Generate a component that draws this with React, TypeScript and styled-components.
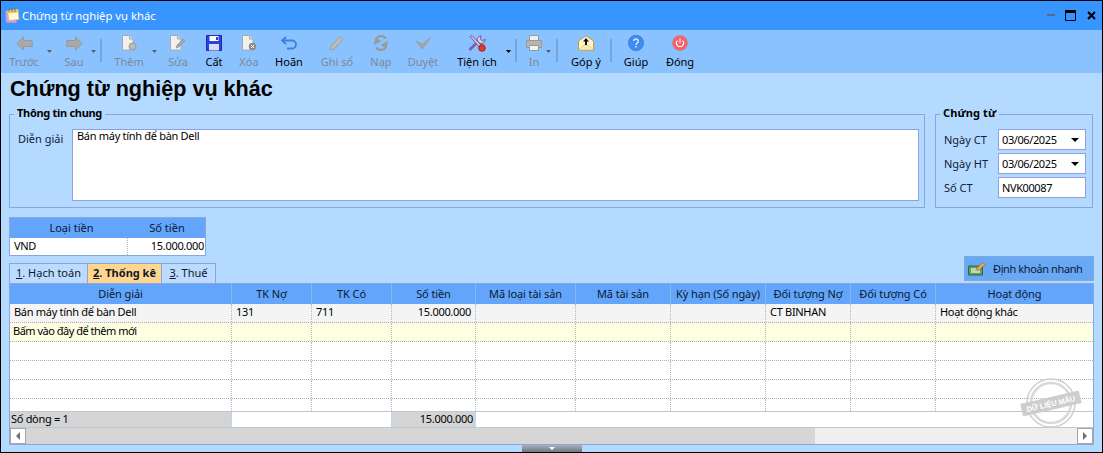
import React from "react";
import styled, { createGlobalStyle } from "styled-components";

const Global = createGlobalStyle`
  html, body { margin: 0; padding: 0; height: 100%; overflow: hidden; }
  #root { height: 100%; }
  * { box-sizing: border-box; }
  body { font-family: "Noto Sans", "Liberation Sans", Arial, sans-serif; font-size: 11px; color: #000; }
`;

const FONT_LINE = "#8AA6DC";

const Window = styled.div`
  position: relative;
  width: 1103px;
  height: 453px;
  border: 1px solid #000;
  background: #b5daff;
  display: flex;
  flex-direction: column;
  overflow: hidden;
`;
const TitleBar = styled.div`
  height: 29px;
  background: #3895ff;
  display: flex;
  align-items: center;
  padding: 0 6px 0 3px;
  flex: none;
`;
const TitleText = styled.div`
  color: #fff;
  font-size: 11.3px;
  margin-left: 2px;
  flex: 1;
`;
const WinControls = styled.div`
  display: flex;
  align-items: center;
`;
const WinBtn = styled.svg<{ $ml: number }>`
  margin-left: ${(p) => p.$ml}px;
  display: block;
`;
const Toolbar = styled.div`
  height: 43px;
  background: #8ac2ff;
  display: flex;
  align-items: flex-start;
  flex: none;
`;
const Tool = styled.div<{ $w: number; $ml: number; $off?: boolean }>`
  width: ${(p) => p.$w}px;
  margin-left: ${(p) => p.$ml}px;
  flex: none;
  display: flex;
  flex-direction: column;
  align-items: center;
  padding-top: 3px;
  color: ${(p) => (p.$off ? "#7d8894" : "#000")};
  white-space: nowrap;
`;
const ToolIcon = styled.div`
  height: 20px;
  display: flex;
  align-items: center;
  justify-content: center;
`;
const ToolLabel = styled.div`
  margin-top: 1px;
  line-height: 15px;
`;
const Caret = styled.div<{ $off?: boolean }>`
  width: 5px;
  height: 3px;
  flex: none;
  margin-top: 20px;
  clip-path: polygon(0 0, 100% 0, 50% 100%);
  background: ${(p) => (p.$off ? "#55606c" : "#000")};
`;
const Sep = styled.div<{ $ml: number }>`
  width: 2px;
  height: 23px;
  margin-top: 9px;
  margin-left: ${(p) => p.$ml}px;
  background: #74a6dc;
  flex: none;
`;
const Body = styled.div`
  flex: 1;
  display: flex;
  flex-direction: column;
  padding: 0 8px 0 8px;
  min-height: 0;
`;
const Heading = styled.h1`
  margin: 0;
  height: 34px;
  padding: 2px 0 0 1px;
  font-family: "Liberation Sans", Arial, sans-serif;
  font-size: 21.6px;
  line-height: 28px;
  font-weight: 700;
  color: #000;
`;
const Groups = styled.div`
  display: flex;
  gap: 10px;
  height: 101px;
  padding-right: 1px;
`;
const Group = styled.fieldset<{ $w?: number }>`
  margin: 0;
  min-width: 0;
  border: 1px solid ${FONT_LINE};
  padding: 8px 5px 5px 8px;
  ${(p) => (p.$w ? `width: ${p.$w}px; flex: none;` : "flex: 1;")}
  display: flex;
`;
const GroupTitle = styled.legend<{ $tight?: boolean }>`
  font-weight: 700;
  margin-left: -4px;
  padding: 0 3px 2px;
  line-height: 12px;
  letter-spacing: ${(p) => (p.$tight ? "-0.3px" : "0.1px")};
`;
const NoteRow = styled.div`
  display: flex;
  flex: 1;
  height: 72px;
`;
const NoteLabel = styled.div`
  width: 54px;
  flex: none;
  padding-top: 2px;
  color: #10203a;
`;
const NoteBox = styled.div`
  flex: 1;
  height: 72px;
  background: #fff;
  border: 1px solid #8f9fe2;
  padding: 0 4px;
  line-height: 12px;
  letter-spacing: -0.3px;
`;
const Fields = styled.div`
  display: flex;
  flex-direction: column;
  gap: 3px;
  width: 100%;
`;
const FieldRow = styled.div`
  display: flex;
  align-items: center;
  height: 21px;
`;
const FieldLabel = styled.div`
  width: 54px;
  flex: none;
  color: #10203a;
`;
const Input = styled.div`
  width: 88px;
  height: 21px;
  background: #fff;
  border: 1px solid #8f9fe2;
  display: flex;
  align-items: center;
  justify-content: space-between;
  padding: 0 6px 0 3px;
  letter-spacing: -0.4px;
`;
const SelectCaret = styled.span`
  width: 0;
  height: 0;
  border-left: 4px solid transparent;
  border-right: 4px solid transparent;
  border-top: 4px solid #000;
  margin-top: 1px;
`;
const MiniGrid = styled.div`
  margin-top: 9px;
  width: 197px;
  height: 39px;
  border: 1px solid ${FONT_LINE};
  background: #fff;
  flex: none;
`;
const MiniHead = styled.div`
  display: grid;
  grid-template-columns: 117px 78px;
  height: 20px;
  background: #62a5fb;
  line-height: 19px;
  text-align: center;
  color: #0a1a30;
`;
const MiniHeadCell = styled.div<{ $pad: number }>`
  padding-left: ${(p) => p.$pad}px;
`;
const MiniRow = styled.div`
  display: grid;
  grid-template-columns: 117px 78px;
  height: 17px;
  line-height: 15px;
  letter-spacing: -0.3px;
`;
const MiniCell = styled.div<{ $right?: boolean }>`
  padding: 0 1px 0 4px;
  text-align: ${(p) => (p.$right ? "right" : "left")};
  ${(p) => (p.$right ? "border-left: 1px dotted #b5b5b5;" : "")}
`;
const TabRow = styled.div`
  height: 27px;
  display: flex;
  justify-content: space-between;
  flex: none;
`;
const Tabs = styled.div`
  display: flex;
  align-self: flex-end;
  height: 20px;
`;
const Tab = styled.div<{ $w: number; $on?: boolean }>`
  width: ${(p) => p.$w}px;
  height: 20px;
  border: 1px solid ${FONT_LINE};
  border-bottom: none;
  margin-left: -1px;
  background: ${(p) => (p.$on ? "#ffd68f" : "#bcdcff")};
  font-weight: ${(p) => (p.$on ? 700 : 400)};
  text-align: center;
  line-height: 17px;
  color: #101828;
  &:first-child { margin-left: 0; }
`;
const Under = styled.span`
  text-decoration: underline;
`;
const QuickBtn = styled.div`
  width: 130px;
  height: 25px;
  background: #69a8f5;
  border: 1px solid #7fa8dc;
  display: flex;
  align-items: center;
  padding-left: 3px;
  color: #0a1a30;
`;
const QuickText = styled.span`
  margin-left: 7px;
  white-space: nowrap;
  letter-spacing: -0.4px;
`;
const DataGrid = styled.div`
  height: 162px;
  border: 1px solid ${FONT_LINE};
  background: #fff;
  display: flex;
  flex-direction: column;
  flex: none;
`;
const COLS = "222px 80px 80px 84px 100px 95px 95px 85px 85px 157px";
const HeadRow = styled.div`
  display: grid;
  grid-template-columns: ${COLS};
  height: 20px;
  background: #62a5fb;
  flex: none;
`;
const HeadCell = styled.div`
  text-align: center;
  line-height: 19px;
  letter-spacing: -0.1px;
  color: #0a1a30;
  border-right: 1px solid #86b8f3;
  white-space: nowrap;
  overflow: hidden;
  &:last-child { border-right: none; }
`;
const Rows = styled.div`
  flex: none;
  height: 107px;
  overflow: hidden;
`;
const Row = styled.div<{ $bg: string; $end?: boolean }>`
  display: grid;
  grid-template-columns: ${COLS};
  height: ${(p) => (p.$end ? 12 : 19)}px;
  background: ${(p) => p.$bg};
  border-bottom: ${(p) => (p.$end ? "none" : "1px dotted #b0b0b0")};
`;
const Cell = styled.div<{ $right?: boolean; $hint?: boolean }>`
  border-right: 1px dotted #b8b8b8;
  padding: 0 4px 0 ${(p) => (p.$hint ? 3 : 4)}px;
  line-height: 16px;
  letter-spacing: ${(p) => (p.$hint ? "-0.5px" : "-0.3px")};
  text-align: ${(p) => (p.$right ? "right" : "left")};
  white-space: nowrap;
  &:last-child { border-right: none; }
`;
const Summary = styled.div`
  display: grid;
  grid-template-columns: 222px 160px 84px 1fr;
  height: 17px;
  flex: none;
  border-top: 1px solid #b9c9dc;
  border-bottom: 1px solid #b9c9dc;
`;
const SumCell = styled.div<{ $grey?: boolean; $right?: boolean }>`
  background: ${(p) => (p.$grey ? "#d4d4d4" : "#fff")};
  border-right: 1px solid #c5d3e4;
  padding: 0 2px 0 1px;
  line-height: 14px;
  letter-spacing: -0.3px;
  text-align: ${(p) => (p.$right ? "right" : "left")};
  &:last-child { border-right: none; }
`;
const ScrollBar = styled.div`
  flex: 1;
  min-height: 0;
  display: flex;
  background: #efefef;
`;
const ScrollBtn = styled.div`
  width: 16px;
  flex: none;
  background: #fff;
  border: 1px solid #a6a6a6;
  display: flex;
  align-items: center;
  justify-content: center;
`;
const Thumb = styled.div`
  width: 789px;
  background: #d6d6d6;
  flex: none;
`;
const Track = styled.div`
  flex: 1;
`;
const Arrow = styled.span<{ $dir: "l" | "r" }>`
  width: 0;
  height: 0;
  border-top: 4px solid transparent;
  border-bottom: 4px solid transparent;
  ${(p) => (p.$dir === "l" ? "border-right: 4px solid #707070;" : "border-left: 4px solid #707070;")}
`;
const HandleWrap = styled.div`
  flex: 1;
  display: flex;
  justify-content: center;
`;
const Handle = styled.div`
  width: 60px;
  height: 7px;
  background: linear-gradient(#a8b0bc, #6e7784);
  display: flex;
  justify-content: center;
  padding-top: 2px;
`;
const HandleArrow = styled.span`
  width: 0;
  height: 0;
  border-left: 3px solid transparent;
  border-right: 3px solid transparent;
  border-top: 3px solid #fff;
`;
const Stamp = styled.svg`
  position: absolute;
  left: 1017px;
  top: 376px;
  pointer-events: none;
`;
const StampText = styled.text`
  font-family: "Liberation Sans", Arial, sans-serif;
  font-size: 7.5px;
  font-weight: 700;
  fill: #fff;
`;

const G = "#a9a9a9";
const icons: Record<string, React.ReactNode> = {
  back: (
    <svg width="17" height="15" viewBox="0 0 17 15"><path d="M7.5.8 1 7.5l6.5 6.7v-3.7h8.7v-6H7.5z" fill={G} stroke="#999" /></svg>
  ),
  next: (
    <svg width="17" height="15" viewBox="0 0 17 15"><path d="M9.5.8 16 7.5l-6.5 6.7v-3.7H.8v-6h8.7z" fill={G} stroke="#999" /></svg>
  ),
  add: (
    <svg width="15" height="16" viewBox="0 0 15 16"><path d="M.5.5h7l3.500 3.500v11H.5z" fill="#f0f0f0" stroke="#aaa" /><path d="M7.500.5V4H11" fill="#ddd" stroke="#aaa" /><circle cx="10.500" cy="11.500" r="3.500" fill="#bbb" stroke="#999" /></svg>
  ),
  edit: (
    <svg width="16" height="16" viewBox="0 0 16 16"><path d="M.5.5h7l3.500 3.500v11H.5z" fill="#f0f0f0" stroke="#aaa" /><path d="M7.500.5V4H11" fill="#ddd" stroke="#aaa" /><path d="m6 13 1-3 6-6 2 2-6 6z" fill="#a5a5a5" stroke="#8f8f8f" strokeWidth=".6" /></svg>
  ),
  save: (
    <svg width="16" height="16" viewBox="0 0 16 16"><path d="M.5.5h15v15H.5z" fill="#2f3fe0" stroke="#1c2bb0" /><path d="M3.500 1h9v5h-9z" fill="#fff" /><path d="M3 9h10v6.500H3z" fill="#d5dcf8" /><path d="M10 2h2v3h-2z" fill="#2f3fe0" /></svg>
  ),
  del: (
    <svg width="15" height="16" viewBox="0 0 15 16"><path d="M.5.5h7l3.500 3.500v11H.5z" fill="#f0f0f0" stroke="#aaa" /><path d="M7.500.5V4H11" fill="#ddd" stroke="#aaa" /><circle cx="10.500" cy="11.500" r="3.700" fill="#8c8c8c" /><path d="m9 10 3 3m0-3-3 3" stroke="#fff" /></svg>
  ),
  undo: (
    <svg width="16" height="14" viewBox="0 0 16 14"><path d="M5 1 1 4.500 5 8" fill="none" stroke="#3a80d8" strokeWidth="1.800" /><path d="M1.500 4.500H11a3.700 3.700 0 0 1 0 8H6" fill="none" stroke="#3a80d8" strokeWidth="1.800" /></svg>
  ),
  pencil: (
    <svg width="16" height="16" viewBox="0 0 16 16"><path d="m1 15 1-4 9-9.500 3 3-9 9.500z" fill="#bbb" stroke="#9c9c9c" /></svg>
  ),
  reload: (
    <svg width="16" height="16" viewBox="0 0 16 16"><path d="M13 3.500A6 6 0 0 0 3 4l-.5 4L6 6 4.500 4.500M3 12.500A6 6 0 0 0 13 12l.500-4L10 10l1.500 1.500" fill="none" stroke="#9a9a9a" strokeWidth="2.400" /></svg>
  ),
  check: (
    <svg width="17" height="14" viewBox="0 0 17 14"><path d="m1 5 6.500 8L16 1 7.500 8z" fill="#a5a5a5" stroke="#999" strokeWidth=".8" /></svg>
  ),
  tools: (
    <svg width="18" height="17" viewBox="0 0 18 17"><path d="M1.500 15 11 5.500" stroke="#7a5ea8" strokeWidth="2.600" /><path d="M13 .8a4 4 0 0 0-3.500 5.500L12 8.500A4 4 0 0 0 17 4l-2.500 2-2-2z" fill="#d8c9ec" stroke="#6f5a9c" /><path d="m2 1.500 2-1 10 10.500-2 2z" fill="#cfc3e4" stroke="#6f5a9c" /><circle cx="14" cy="13" r="3.300" fill="#d93a34" stroke="#a52420" /></svg>
  ),
  print: (
    <svg width="16" height="16" viewBox="0 0 16 16"><path d="M3.500.5h9v5h-9z" fill="#eee" stroke="#999" /><path d="M.5 5.500h15v7h-15z" fill="#b5b5b5" stroke="#999" /><path d="M3.500 10.500h9v5h-9z" fill="#f3f3f3" stroke="#999" /></svg>
  ),
  mail: (
    <svg width="16" height="16" viewBox="0 0 16 16"><path d="M.5 6 8 .8 15.500 6v9H.5z" fill="#fff6d2" stroke="#c9992b" /><path d="M.5 15 6 10h4l5.500 5z" fill="#fbeab0" stroke="#d5ad4c" strokeWidth=".5" /><path d="M8 3 5 6.500h2V10h2V6.500h2z" fill="#111" /></svg>
  ),
  help: (
    <svg width="16" height="16" viewBox="0 0 16 16"><circle cx="8" cy="8" r="7.700" fill="#3f8cf0" stroke="#2f74d0" strokeWidth=".6" /><path d="M5.800 6a2.200 2.200 0 1 1 3.300 2C8.300 8.500 8 9 8 10" fill="none" stroke="#eef5ff" strokeWidth="1.300" /><path d="M7.300 11h1.400v1.500H7.300z" fill="#eef5ff" /></svg>
  ),
  power: (
    <svg width="16" height="16" viewBox="0 0 16 16"><circle cx="8" cy="8" r="7.700" fill="#f1636a" /><path d="M5.500 5.600a3.500 3.500 0 1 0 5 0" fill="none" stroke="#fff" strokeWidth="1.100" /><path d="M8 3.500v4.500" stroke="#fff" strokeWidth="1.100" /></svg>
  ),
};

type Item =
  | { sep: number }
  | { label: string; icon: string; w: number; ml: number; off?: boolean; caret?: boolean };

const items: Item[] = [
  { label: "Trước", icon: "back", w: 46, ml: 0, off: true, caret: true },
  { label: "Sau", icon: "next", w: 34, ml: 5, off: true, caret: true },
  { sep: 4 },
  { label: "Thêm", icon: "add", w: 46, ml: 4, off: true, caret: true },
  { label: "Sửa", icon: "edit", w: 30, ml: 6, off: true },
  { label: "Cất", icon: "save", w: 30, ml: 6 },
  { label: "Xóa", icon: "del", w: 30, ml: 5, off: true },
  { label: "Hoãn", icon: "undo", w: 36, ml: 7 },
  { label: "Ghi sổ", icon: "pencil", w: 44, ml: 8, off: true },
  { label: "Nạp", icon: "reload", w: 30, ml: 7, off: true },
  { label: "Duyệt", icon: "check", w: 40, ml: 7, off: true },
  { label: "Tiện ích", icon: "tools", w: 58, ml: 5, caret: true },
  { sep: 4 },
  { label: "In", icon: "print", w: 24, ml: 5, off: true, caret: true },
  { sep: 5 },
  { label: "Góp ý", icon: "mail", w: 44, ml: 6 },
  { sep: 2 },
  { label: "Giúp", icon: "help", w: 34, ml: 7 },
  { label: "Đóng", icon: "power", w: 40, ml: 7 },
];

const heads = ["Diễn giải", "TK Nợ", "TK Có", "Số tiền", "Mã loại tài sản", "Mã tài sản", "Kỳ hạn (Số ngày)", "Đối tượng Nợ", "Đối tượng Có", "Hoạt động"];
const dataRow = ["Bán máy tính để bàn Dell", "131", "711", "15.000.000", "", "", "", "CT BINHAN", "", "Hoạt động khác"];
const addRow = ["Bấm vào đây để thêm mới", "", "", "", "", "", "", "", "", ""];
const blank = heads.map(() => "");

function GridRow({ cells, bg, end, hint }: { cells: string[]; bg: string; end?: boolean; hint?: boolean }) {
  return (
    <Row $bg={bg} $end={end}>
      {cells.map((c, i) => (
        <Cell key={i} $right={i === 3} $hint={hint}>{c}</Cell>
      ))}
    </Row>
  );
}

export default function App() {
  return (
    <>
      <Global />
      <Window>
        <TitleBar>
          <svg width="16" height="17" viewBox="0 0 16 17">
            <path d="M1 4h11l1 12H2z" fill="#b9a7e6" stroke="#8a78c0" strokeWidth=".6" />
            <path d="M3.500 3.500 14 2.500l1 10-10 1z" fill="#fff7d8" stroke="#d9b94a" strokeWidth=".6" />
            <path d="M3.500 3.500 14 2.500l.3 3-10.500 1z" fill="#f2cf4a" />
            <path d="M5 1v4M8 1v4M11 1v4" stroke="#6d6a88" strokeWidth=".9" />
          </svg>
          <TitleText>Chứng từ nghiệp vụ khác</TitleText>
          <WinControls>
            <WinBtn $ml={0} width="8" height="3" viewBox="0 0 8 3"><path d="M0 0h8v2H0z" fill="#5c6a7c" /></WinBtn>
            <WinBtn $ml={10} width="11" height="11" viewBox="0 0 11 11"><path d="M.5 1.500h10v9H.5z" fill="none" stroke="#000" /><path d="M0 0h11v3H0z" fill="#000" /></WinBtn>
            <WinBtn $ml={11} width="9" height="9" viewBox="0 0 9 9"><path d="m1 1 7 7m0-7-7 7" stroke="#000" strokeWidth="2" /></WinBtn>
          </WinControls>
        </TitleBar>
        <Toolbar>
          {items.map((it, i) =>
            "sep" in it ? (
              <Sep key={i} $ml={it.sep} />
            ) : (
              <React.Fragment key={i}>
                <Tool $w={it.w} $ml={it.ml} $off={it.off}>
                  <ToolIcon>{icons[it.icon]}</ToolIcon>
                  <ToolLabel>{it.label}</ToolLabel>
                </Tool>
                {it.caret && <Caret $off={it.off} />}
              </React.Fragment>
            )
          )}
        </Toolbar>
        <Body>
          <Heading>Chứng từ nghiệp vụ khác</Heading>
          <Groups>
            <Group>
              <GroupTitle $tight>Thông tin chung</GroupTitle>
              <NoteRow>
                <NoteLabel>Diễn giải</NoteLabel>
                <NoteBox>Bán máy tính để bàn Dell</NoteBox>
              </NoteRow>
            </Group>
            <Group $w={158}>
              <GroupTitle>Chứng từ</GroupTitle>
              <Fields>
                <FieldRow><FieldLabel>Ngày CT</FieldLabel><Input>03/06/2025<SelectCaret /></Input></FieldRow>
                <FieldRow><FieldLabel>Ngày HT</FieldLabel><Input>03/06/2025<SelectCaret /></Input></FieldRow>
                <FieldRow><FieldLabel>Số CT</FieldLabel><Input>NVK00087</Input></FieldRow>
              </Fields>
            </Group>
          </Groups>
          <MiniGrid>
            <MiniHead><MiniHeadCell $pad={6}>Loại tiền</MiniHeadCell><MiniHeadCell $pad={2}>Số tiền</MiniHeadCell></MiniHead>
            <MiniRow><MiniCell>VND</MiniCell><MiniCell $right>15.000.000</MiniCell></MiniRow>
          </MiniGrid>
          <TabRow>
            <Tabs>
              <Tab $w={79}><Under>1</Under>. Hạch toán</Tab>
              <Tab $w={75} $on><Under>2</Under>. Thống kê</Tab>
              <Tab $w={55}><Under>3</Under>. Thuế</Tab>
            </Tabs>
            <QuickBtn>
              <svg width="18" height="14" viewBox="0 0 18 14">
                <path d="M.5 4h14v9H.5z" fill="#5fa06a" stroke="#2f6b3a" />
                <path d="M3 6h9v5H3z" fill="#b8dcae" />
                <path d="m8 8 1-2 6-5.500 2 2L11 8z" fill="#e3b04a" stroke="#b0502a" strokeWidth=".6" />
              </svg>
              <QuickText>Định khoản nhanh</QuickText>
            </QuickBtn>
          </TabRow>
          <DataGrid>
            <HeadRow>{heads.map((h) => <HeadCell key={h}>{h}</HeadCell>)}</HeadRow>
            <Rows>
              <GridRow cells={dataRow} bg="#f4f4f4" />
              <GridRow cells={addRow} bg="#fefee2" hint />
              <GridRow cells={blank} bg="#fff" />
              <GridRow cells={blank} bg="#fff" />
              <GridRow cells={blank} bg="#fff" />
              <GridRow cells={blank} bg="#fff" end />
            </Rows>
            <Summary>
              <SumCell $grey>Số dòng = 1</SumCell>
              <SumCell />
              <SumCell $grey $right>15.000.000</SumCell>
              <SumCell />
            </Summary>
            <ScrollBar>
              <ScrollBtn><Arrow $dir="l" /></ScrollBtn>
              <Thumb />
              <Track />
              <ScrollBtn><Arrow $dir="r" /></ScrollBtn>
            </ScrollBar>
          </DataGrid>
          <HandleWrap>
            <Handle><HandleArrow /></Handle>
          </HandleWrap>
        </Body>
        <Stamp width="68" height="56" viewBox="0 0 68 56">
          <circle cx="33" cy="26" r="24" fill="none" stroke="#cfcfcf" strokeWidth="1.500" />
          <circle cx="33" cy="26" r="20" fill="none" stroke="#d8d8d8" strokeWidth="2.500" />
          <g transform="rotate(-13 33 27)">
            <rect x="3" y="20" width="60" height="13" fill="#cdcdcd" />
            <StampText x="33" y="29.500" textAnchor="middle">DỮ LIỆU MẪU</StampText>
          </g>
        </Stamp>
      </Window>
    </>
  );
}
